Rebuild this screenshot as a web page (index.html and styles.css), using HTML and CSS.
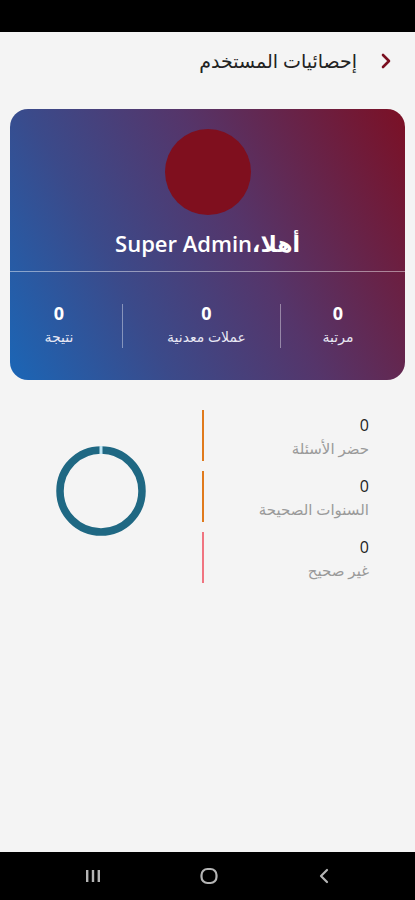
FILE: index.html
```html
<!DOCTYPE html>
<html lang="ar">
<head>
    <meta charset="UTF-8">
    <meta name="viewport" content="width=device-width, initial-scale=1.0">
    <title>إحصائيات المستخدم</title>
    <link rel="stylesheet" href="styles.css">
</head>
<body>
    <div class="status-bar"></div>

    <div class="page">
        <div class="header">
            <svg class="back" width="14" height="18" viewBox="0 0 14 18">
                <path d="M4 3 L10 9 L4 15" fill="none" stroke="#7a0f1f" stroke-width="2.6" stroke-linecap="round" stroke-linejoin="round"/>
            </svg>
            <h1 class="title">إحصائيات المستخدم</h1>
        </div>

        <div class="card">
            <div class="avatar"></div>
            <div class="greeting">أهلا،Super Admin</div>
            <div class="stats">
                <div class="stat">
                    <div class="stat-value">0</div>
                    <div class="stat-label">مرتبة</div>
                </div>
                <div class="sep"></div>
                <div class="stat">
                    <div class="stat-value">0</div>
                    <div class="stat-label">عملات معدنية</div>
                </div>
                <div class="sep"></div>
                <div class="stat">
                    <div class="stat-value">0</div>
                    <div class="stat-label">نتيجة</div>
                </div>
            </div>
        </div>

        <div class="chart">
            <div class="donut-box">
                <svg width="96" height="96" viewBox="0 0 96 96">
                    <circle cx="48" cy="48" r="41" fill="none" stroke="#1f6883" stroke-width="7.5"/>
                    <rect x="46.5" y="3" width="3" height="8" fill="#bfe6f5"/>
                </svg>
            </div>
            <div class="bars">
                <div class="bar orange"></div>
                <div class="bar orange"></div>
                <div class="bar pink"></div>
            </div>
            <div class="legend">
                <div class="legend-item">
                    <div class="legend-value">0</div>
                    <div class="legend-label">حضر الأسئلة</div>
                </div>
                <div class="legend-item">
                    <div class="legend-value">0</div>
                    <div class="legend-label">السنوات الصحيحة</div>
                </div>
                <div class="legend-item">
                    <div class="legend-value">0</div>
                    <div class="legend-label">غير صحيح</div>
                </div>
            </div>
        </div>
    </div>

    <div class="nav-bar">
        <svg width="20" height="16" viewBox="0 0 20 16">
            <rect x="3" y="2" width="2.4" height="12" fill="#b5b5b5"/>
            <rect x="8.8" y="2" width="2.4" height="12" fill="#b5b5b5"/>
            <rect x="14.6" y="2" width="2.4" height="12" fill="#b5b5b5"/>
        </svg>
        <svg width="20" height="18" viewBox="0 0 20 18">
            <rect x="2.5" y="2" width="15" height="14" rx="6" fill="none" stroke="#b5b5b5" stroke-width="2.2"/>
        </svg>
        <svg width="20" height="18" viewBox="0 0 20 18">
            <path d="M12 3 L6 9 L12 15" fill="none" stroke="#b5b5b5" stroke-width="2.2" stroke-linecap="round" stroke-linejoin="round"/>
        </svg>
    </div>
</body>
</html>
```

FILE: styles.css
```css
body {
    margin: 0;
    width: 415px;
    height: 900px;
    background: #f4f4f4;
    font-family: "Open Sans", "DejaVu Sans", sans-serif;
    display: flex;
    flex-direction: column;
    overflow: hidden;
}
.status-bar {
    height: 32px;
    background: #000;
    flex-shrink: 0;
}
.page {
    flex: 1;
    direction: rtl;
}
.header {
    height: 58px;
    display: flex;
    align-items: center;
    padding-right: 22px;
    gap: 22px;
}
.title {
    margin: 0;
    font-size: 19px;
    font-weight: normal;
    color: #222;
}
.card {
    margin: 19px 10px 0 10px;
    height: 271px;
    border-radius: 18px;
    background: linear-gradient(62deg, #1b66b6 0%, #3b4a8a 30%, #55356a 58%, #7b1025 100%);
    display: flex;
    flex-direction: column;
    align-items: center;
    overflow: hidden;
    color: #fff;
}
.avatar {
    margin-top: 20px;
    width: 86px;
    height: 86px;
    border-radius: 50%;
    background: #7f0f1e;
}
.greeting {
    margin-top: 14px;
    font-size: 22px;
    font-weight: 600;
    line-height: 28px;
    direction: ltr;
    unicode-bidi: plaintext;
}
.stats {
    margin-top: 14px;
    width: 100%;
    height: 108px;
    border-top: 1px solid rgba(255, 255, 255, 0.45);
    display: flex;
    align-items: center;
    direction: rtl;
}
.stat {
    flex: 1;
    text-align: center;
    padding-left: 10px;
}
.stat:first-child {
    flex: 0 0 114px;
    padding-right: 10px;
    padding-left: 0;
}
.stat:last-child {
    flex: 0 0 98px;
    padding-right: 14px;
    padding-left: 0;
}
.stat-value {
    font-size: 18px;
    font-weight: 700;
    line-height: 24px;
    margin-top: -3px;
}
.stat-label {
    font-size: 14px;
    line-height: 24px;
    color: #e8e8f4;
}
.sep {
    width: 1px;
    height: 44px;
    background: rgba(255, 255, 255, 0.4);
}
.chart {
    margin-top: 30px;
    display: flex;
    direction: ltr;
}
.donut-box {
    width: 202px;
    display: flex;
    justify-content: center;
    padding-top: 33px;
    box-sizing: border-box;
}
.bars {
    width: 2px;
    display: flex;
    flex-direction: column;
    gap: 10px;
}
.bar {
    height: 51px;
    width: 2px;
}
.orange { background: #e07a1c; }
.pink { background: #f07480; }
.legend {
    flex: 1;
    padding-right: 46px;
    direction: rtl;
}
.legend-item {
    height: 61px;
    text-align: right;
}
.legend-value {
    font-size: 16px;
    line-height: 22px;
    color: #222;
    padding-top: 4px;
}
.legend-label {
    font-size: 15px;
    line-height: 24px;
    color: #9a9a9a;
}
.nav-bar {
    height: 48px;
    background: #000;
    flex-shrink: 0;
    display: flex;
    justify-content: center;
    align-items: center;
    gap: 96px;
    padding-left: 2px;
}
```
